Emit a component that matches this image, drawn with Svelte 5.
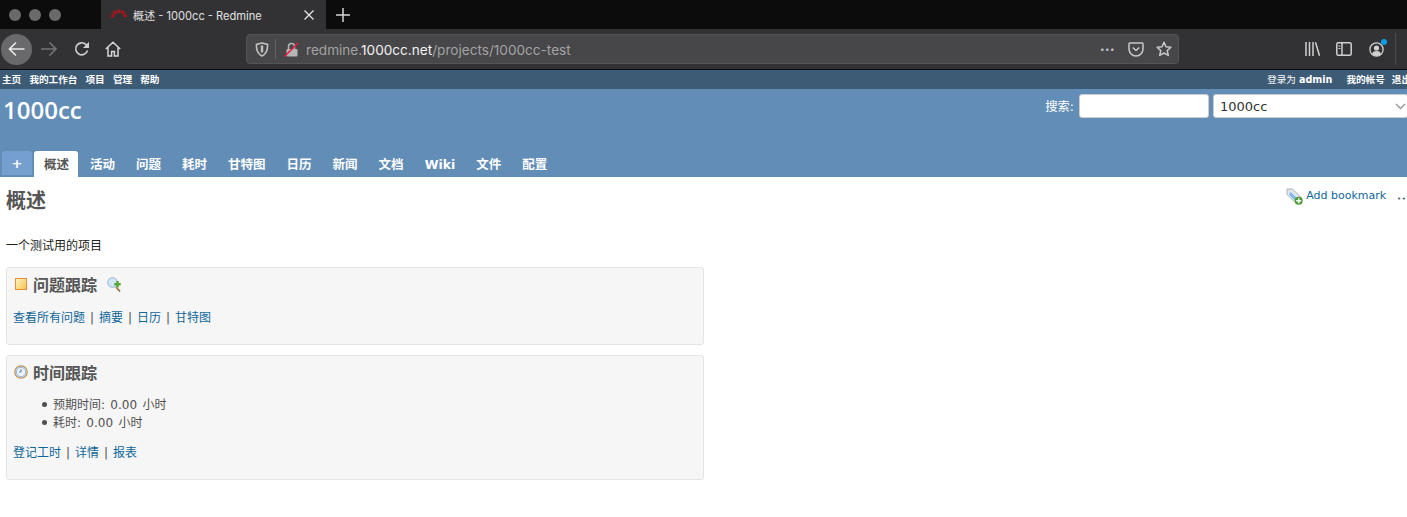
<script>
	const topLinks = ["主页", "我的工作台", "项目", "管理", "帮助"];
	const tabs = ["概述", "活动", "问题", "耗时", "甘特图", "日历", "新闻", "文档", "Wiki", "文件", "配置"];
	const issueLinks = ["查看所有问题", "摘要", "日历", "甘特图"];
	const timeLinks = ["登记工时", "详情", "报表"];
</script>

<div class="browser">
	<!-- Tab strip -->
	<div class="tabstrip">
		<div class="lights"><i></i><i></i><i></i></div>
		<div class="btab">
			<svg class="favicon" width="16" height="14" viewBox="0 0 16 14">
				<path d="M1.600 9.500A6.400 6.400 0 0 1 14.400 9.500" fill="none" stroke="#a5161c" stroke-width="3.400" stroke-dasharray="3.200 .8" />
			</svg>
			<span class="btab-title">概述 - 1000cc - Redmine</span>
			<svg class="close" width="10" height="10" viewBox="0 0 10 10">
				<path d="M.5.5l9 9M9.500.5l-9 9" stroke="#e6e6e7" stroke-width="1.300" />
			</svg>
		</div>
		<svg class="newtab" width="14" height="14" viewBox="0 0 14 14">
			<path d="M7 0v14M0 7h14" stroke="#d4d4d5" stroke-width="1.500" />
		</svg>
	</div>

	<!-- Nav toolbar -->
	<div class="toolbar">
		<div class="back">
			<svg width="18" height="16" viewBox="0 0 18 16">
				<path d="M1.500 8h15M8 1.500L1.500 8 8 14.500" fill="none" stroke="#e8e8e8" stroke-width="1.700" />
			</svg>
		</div>
		<svg class="fwd" width="18" height="16" viewBox="0 0 18 16">
			<path d="M1 8h15M9.500 1.500L16 8l-6.500 6.500" fill="none" stroke="#747475" stroke-width="1.600" />
		</svg>
		<svg class="reload" width="16" height="16" viewBox="0 0 16 16">
			<path d="M13.500 9.500A6 6 0 1 1 12 3.600L14 6" fill="none" stroke="#cfcfd0" stroke-width="1.600" />
			<path d="M15 .8V7H9z" fill="#cfcfd0" />
		</svg>
		<svg class="home" width="16" height="16" viewBox="0 0 16 16">
			<path d="M.8 8L8 1.200 15.200 8M3 6.500V15h3.600v-4.500h2.800V15H13V6.500" fill="none" stroke="#d6d6d7" stroke-width="1.500" />
		</svg>
		<div class="urlbar">
			<svg class="shield" width="14" height="15" viewBox="0 0 14 15">
				<path d="M7 1l5.600 1.400c.2 5-1.200 9.600-5.600 11.600C2.600 12 1.200 7.400 1.400 2.400z" fill="none" stroke="#c2c2c3" stroke-width="1.600" />
				<path d="M7 3.500v7" stroke="#c2c2c3" stroke-width="2.400" />
			</svg>
			<span class="sep"></span>
			<svg class="lock" width="15" height="15" viewBox="0 0 15 15">
				<path d="M4.500 7V4.500a3 3 0 0 1 6 0V7" fill="none" stroke="#b5b5b6" stroke-width="1.500" />
				<rect x="2.500" y="7" width="11" height="7.500" rx="1" fill="#b5b5b6" />
				<path d="M.5 14.500L14 1" stroke="#f0163a" stroke-width="1.500" />
			</svg>
			<span class="url">redmine.<b>1000cc.net</b>/projects/1000cc-test</span>
			<span class="url-dots">•••</span>
			<svg class="pocket" width="16" height="15" viewBox="0 0 16 15">
				<path d="M1.800 1h12.400c.5 0 .8.300.8.800V7a7 7 0 0 1-14 0V1.800c0-.5.300-.8.800-.8z" fill="none" stroke="#c8c8c9" stroke-width="1.500" />
				<path d="M4.800 5.500L8 8.500l3.200-3" fill="none" stroke="#c8c8c9" stroke-width="1.600" />
			</svg>
			<svg class="star" width="16" height="16" viewBox="0 0 16 16">
				<path d="M8 1.300l2 4.500 4.900.5-3.700 3.300 1.100 4.800L8 12l-4.300 2.400 1.100-4.800L1.100 6.300 6 5.800z" fill="none" stroke="#c8c8c9" stroke-width="1.500" stroke-linejoin="round" />
			</svg>
		</div>
		<svg class="library" width="16" height="14" viewBox="0 0 16 14">
			<path d="M1 0v14M4.500 0v14M8 0v14M10.500.3l4 13.500" fill="none" stroke="#cfcfd0" stroke-width="1.500" />
		</svg>
		<svg class="sidebar" width="16" height="14" viewBox="0 0 16 14">
			<rect x=".8" y=".8" width="14.400" height="12.400" rx="1.500" fill="none" stroke="#cfcfd0" stroke-width="1.500" />
			<path d="M6 1v12" stroke="#cfcfd0" stroke-width="1.500" />
			<path d="M2.500 4h2M2.500 6.500h2" stroke="#cfcfd0" stroke-width="1" />
		</svg>
		<div class="account">
			<svg width="15" height="15" viewBox="0 0 15 15">
				<circle cx="7.500" cy="7.500" r="6.600" fill="none" stroke="#cfcfd0" stroke-width="1.300" />
				<circle cx="7.500" cy="6" r="2.600" fill="#cfcfd0" />
				<path d="M3 12c.8-2.400 2.400-3 4.500-3s3.700.6 4.500 3a6 6 0 0 1-9 0z" fill="#cfcfd0" />
			</svg>
			<span class="badge"></span>
		</div>
		<span class="tool-sep"></span>
	</div>
</div>

<div class="page">
	<nav class="top-menu">
		<div class="top-left">
			{#each topLinks as link}
				<a href="#top">{link}</a>
			{/each}
		</div>
		<div class="top-right">
			<span class="loggedas">登录为 <b>admin</b></span>
			<a class="account-link" href="#top">我的帐号</a>
			<a href="#top">退出</a>
		</div>
	</nav>

	<header class="header">
		<div class="head-row">
			<h1>1000cc</h1>
			<div class="search">
				<label for="q">搜索:</label>
				<input id="q" type="text" />
				<div class="jump">
					<span>1000cc</span>
					<svg width="11" height="7" viewBox="0 0 11 7">
						<path d="M1 1l4.500 4.500L10 1" fill="none" stroke="#9a9a9a" stroke-width="1.500" />
					</svg>
				</div>
			</div>
		</div>
		<div class="main-menu">
			<a class="new-item" href="#top">+</a>
			{#each tabs as tab, i}
				<a class:selected={i === 0} href="#top">{tab}</a>
			{/each}
		</div>
	</header>

	<main class="content">
		<div class="content-head">
			<h2>概述</h2>
			<div class="contextual">
				<svg width="17" height="17" viewBox="0 0 17 17">
					<path d="M1 1h5.500l8.500 8.500-5 5.500L1 6.500z" fill="#e3e7ec" stroke="#a9b0b8" />
					<path d="M4.500 4l8 7.500-2.500 2-7-7z" fill="#7cb8ee" />
					<circle cx="12.700" cy="12.700" r="4" fill="#4b9a37" />
					<path d="M12.700 10.200v5M10.200 12.700h5" stroke="#fff" stroke-width="1.500" />
				</svg>
				<a href="#top">Add bookmark</a>
				<span class="more">•••</span>
			</div>
		</div>

		<p class="desc">一个测试用的项目</p>

		<section class="box">
			<h3>
				<svg class="box-icon" width="12" height="12" viewBox="0 0 12 12">
					<defs>
						<linearGradient id="iss" x1="0" y1="0" x2="1" y2="1">
							<stop offset="0" stop-color="#fff3c4" />
							<stop offset="1" stop-color="#f6c04a" />
						</linearGradient>
					</defs>
					<rect x=".5" y=".5" width="11" height="11" fill="url(#iss)" stroke="#e2913a" />
					<path d="M2 9.500V6.500h3.500v3z" fill="#fbe08f" />
				</svg>
				问题跟踪
				<svg class="zoom-icon" width="15" height="15" viewBox="0 0 15 15">
					<circle cx="5.500" cy="5.500" r="4.800" fill="#d6e6f8" stroke="#8fb2d8" />
					<path d="M9 10l4 4.500" stroke="#a5713c" stroke-width="1.800" />
					<path d="M10.500 4v6.400M7.300 7.200h6.400" stroke="#58a53c" stroke-width="2.400" />
				</svg>
			</h3>
			<p class="links">
				{#each issueLinks as link, i}
					{#if i > 0}<span class="bar">|</span>{/if}<a href="#top">{link}</a>
				{/each}
			</p>
		</section>

		<section class="box">
			<h3>
				<svg class="box-icon clock" width="14" height="14" viewBox="0 0 14 14">
					<circle cx="7" cy="7" r="6.200" fill="#eef3fa" stroke="#b8945a" stroke-width="1.300" />
					<circle cx="7" cy="7" r="4.700" fill="none" stroke="#8fb0d8" />
					<path d="M7 4v3H4.800" fill="none" stroke="#5a7fae" stroke-width="1" />
				</svg>
				时间跟踪
			</h3>
			<ul>
				<li>预期时间: 0.00 小时</li>
				<li>耗时: 0.00 小时</li>
			</ul>
			<p class="links">
				{#each timeLinks as link, i}
					{#if i > 0}<span class="bar">|</span>{/if}<a href="#top">{link}</a>
				{/each}
			</p>
		</section>
	</main>
</div>

<style>
	:global(body) {
		margin: 0;
		background: #fff;
		overflow: hidden;
	}

	/* ── Browser chrome ── */
	.browser {
		font-family: Inter, "Noto Sans CJK SC", sans-serif;
	}

	.tabstrip {
		display: flex;
		align-items: center;
		height: 29px;
		background: #0c0c0d;
	}

	.lights {
		display: flex;
		gap: 8px;
		width: 101px;
		padding-left: 9px;
		box-sizing: border-box;
	}

	.lights i {
		width: 12px;
		height: 12px;
		border-radius: 50%;
		background: #6a6a6b;
	}

	.btab {
		display: flex;
		align-items: center;
		width: 225px;
		height: 29px;
		background: #323234;
		box-sizing: border-box;
		padding-left: 10px;
	}

	.favicon {
		margin-right: 6px;
	}

	.btab-title {
		flex: 1;
		font-size: 11.100px;
		color: #e0e0e1;
	}

	.close {
		margin-right: 12px;
	}

	.newtab {
		margin-left: 10px;
	}

	.toolbar {
		display: flex;
		align-items: center;
		height: 40px;
		background: #323234;
		border-bottom: 1px solid #0c0c0d;
	}

	.back {
		display: flex;
		align-items: center;
		justify-content: center;
		width: 31px;
		height: 31px;
		margin-left: 1px;
		border-radius: 50%;
		background: #69696b;
	}

	.fwd {
		margin-left: 8px;
	}

	.reload {
		margin-left: 16px;
	}

	.home {
		margin-left: 15px;
	}

	.urlbar {
		display: flex;
		align-items: center;
		width: 933px;
		height: 30px;
		margin-left: 125px;
		box-sizing: border-box;
		border: 1px solid #545456;
		border-radius: 4px;
		background: #474749;
		padding-left: 8px;
		padding-right: 6px;
	}

	.sep {
		width: 1px;
		height: 20px;
		margin: 0 8px 0 6px;
		background: #636365;
	}

	.url {
		flex: 1;
		margin-left: 7px;
		padding-top: 2px;
		font-size: 13.600px;
		color: #a3a3a4;
		white-space: nowrap;
	}

	.url b {
		font-weight: 400;
		color: #f2f2f2;
	}

	.url-dots {
		margin-right: 13px;
		font-size: 8px;
		letter-spacing: 0.5px;
		color: #c0c0c1;
	}

	.pocket {
		margin-right: 12px;
	}

	.library {
		margin-left: 126px;
	}

	.sidebar {
		margin-left: 15px;
	}

	.account {
		position: relative;
		display: flex;
		margin-left: 17px;
	}

	.badge {
		position: absolute;
		top: -3px;
		right: -3px;
		width: 6px;
		height: 6px;
		border-radius: 50%;
		background: #0a9dee;
	}

	.tool-sep {
		width: 1px;
		height: 32px;
		margin-left: 11px;
		background: #4b4b4d;
	}

	/* ── Redmine page ── */
	.page {
		font-family: "DejaVu Sans", "Noto Sans CJK SC", sans-serif;
		font-size: 12px;
		color: #333;
	}

	a {
		text-decoration: none;
	}

	.top-menu {
		display: flex;
		justify-content: space-between;
		height: 17px;
		padding-bottom: 2px;
		align-items: center;
		background: #3e5b76;
		color: #fff;
		font-size: 9.600px;
		font-weight: 700;
		white-space: nowrap;
		overflow: hidden;
	}

	.top-menu a {
		color: #fff;
	}

	.top-left {
		display: flex;
		gap: 8.200px;
		padding-left: 2px;
	}

	.top-right {
		display: flex;
		margin-right: -4px;
	}

	.account-link {
		margin: 0 7px 0 14px;
	}

	.loggedas {
		font-weight: 400;
	}

	.loggedas b {
		font-weight: 700;
	}

	.header {
		display: flex;
		flex-direction: column;
		justify-content: space-between;
		height: 88px;
		background: #628db6;
		color: #fff;
	}

	.head-row {
		display: flex;
		justify-content: space-between;
		align-items: flex-start;
	}

	h1 {
		margin: 3px 0 0 3px;
		font-size: 24px;
		font-weight: 600;
		line-height: 36px;
		font-family: "Open Sans", "DejaVu Sans", sans-serif;
	}

	.search {
		display: flex;
		align-items: center;
		padding-top: 5px;
		margin-right: -1px;
	}

	.search label {
		margin-right: 5px;
		font-size: 12.300px;
	}

	.search input {
		width: 130px;
		height: 24px;
		box-sizing: border-box;
		border: 1px solid #ccc;
		border-radius: 3px;
		background: #fff;
	}

	.jump {
		display: flex;
		align-items: center;
		justify-content: space-between;
		width: 195px;
		height: 24px;
		margin-left: 4px;
		box-sizing: border-box;
		border: 1px solid #ccc;
		border-radius: 3px;
		background: #fff;
		padding: 0 1px 0 6px;
		font-size: 13px;
		color: #333;
	}

	.main-menu {
		display: flex;
		height: 26px;
		padding-left: 2px;
		font-size: 12.500px;
		font-weight: 700;
	}

	.main-menu a {
		padding: 1px 10px 0 11px;
		line-height: 26px;
		height: 25px;
		color: #fff;
	}

	.main-menu a.selected {
		background: #fff;
		color: #555;
		border-radius: 3px 3px 0 0;
		padding: 1px 9px 0 10px;
		margin-right: 1px;
	}

	.main-menu a.new-item {
		width: 30px;
		height: 24px;
		box-sizing: border-box;
		padding: 0;
		margin-right: 2px;
		background: #759fcf;
		border-radius: 3px 3px 0 0;
		text-align: center;
		font-size: 13px;
	}

	.content {
		padding: 0 6px;
	}

	.content-head {
		display: flex;
		justify-content: space-between;
		height: 61px;
	}

	h2 {
		margin: 10px 0 0;
		font-size: 20px;
		line-height: 28px;
		font-weight: 700;
		color: #555;
	}

	.contextual {
		display: flex;
		align-items: flex-start;
		gap: 3px;
		margin-top: 11px;
		margin-right: -10px;
		white-space: nowrap;
		font-size: 11px;
		line-height: 16px;
	}

	.contextual a {
		color: #169;
	}

	.more {
		margin-left: 8px;
		padding-top: 3px;
		font-size: 7px;
		letter-spacing: 0.5px;
		color: #555;
	}

	.desc {
		margin: 0 0 13px;
		font-size: 12px;
		line-height: 16px;
		color: #222;
	}

	.box {
		width: 698px;
		box-sizing: border-box;
		margin-bottom: 10px;
		padding: 6px;
		background: #f6f6f6;
		border: 1px solid #e4e4e4;
		border-radius: 3px;
		color: #505050;
	}

	h3 {
		display: flex;
		align-items: center;
		margin: 0;
		height: 20px;
		font-size: 16px;
		font-weight: 700;
		color: #555;
	}

	.box-icon {
		margin: 0 6px 0 2px;
	}

	.clock {
		margin: 0 5px 0 1px;
	}

	.zoom-icon {
		margin-left: 10px;
	}

	.links {
		margin: 16px 0 12px;
		font-size: 12px;
		line-height: 16px;
	}

	ul + .links {
		margin-top: 13px;
	}

	.links a {
		color: #169;
	}

	.bar {
		display: inline-block;
		width: 14px;
		text-align: center;
		color: #505050;
	}

	ul {
		margin: 14px 0 0;
		padding-left: 40px;
		list-style: none;
		font-size: 12px;
		line-height: 18px;
		word-spacing: 1.500px;
	}

	li::before {
		content: "";
		display: inline-block;
		width: 5px;
		height: 5px;
		margin: 0 6px 2px -11px;
		border-radius: 50%;
		background: #505050;
	}
</style>
